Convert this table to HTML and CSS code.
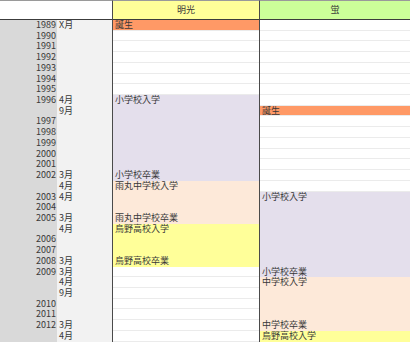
FILE: index.html
```html
<!DOCTYPE html>
<html lang="ja">
<head>
<meta charset="utf-8">
<title>年表</title>
<link rel="stylesheet" href="styles.css">
</head>
<body>
<div class="sheet">
  <div class="head head-blank"></div>
  <div class="head head-m">明光</div>
  <div class="head head-k">蛍</div>

  <div class="col col-year">
    <div class="r">1989</div><div class="r">1990</div><div class="r">1991</div><div class="r">1992</div>
    <div class="r">1993</div><div class="r">1994</div><div class="r">1995</div><div class="r">1996</div>
    <div class="r"></div><div class="r">1997</div><div class="r">1998</div><div class="r">1999</div>
    <div class="r">2000</div><div class="r">2001</div><div class="r">2002</div><div class="r"></div>
    <div class="r">2003</div><div class="r">2004</div><div class="r">2005</div><div class="r"></div>
    <div class="r">2006</div><div class="r">2007</div><div class="r">2008</div><div class="r">2009</div>
    <div class="r"></div><div class="r"></div><div class="r">2010</div><div class="r">2011</div>
    <div class="r">2012</div><div class="r"></div>
  </div>

  <div class="col col-month">
    <div class="r">X月</div><div class="r"></div><div class="r"></div><div class="r"></div>
    <div class="r"></div><div class="r"></div><div class="r"></div><div class="r">4月</div>
    <div class="r">9月</div><div class="r"></div><div class="r"></div><div class="r"></div>
    <div class="r"></div><div class="r"></div><div class="r">3月</div><div class="r">4月</div>
    <div class="r">4月</div><div class="r"></div><div class="r">3月</div><div class="r">4月</div>
    <div class="r"></div><div class="r"></div><div class="r">3月</div><div class="r">3月</div>
    <div class="r">4月</div><div class="r">9月</div><div class="r"></div><div class="r"></div>
    <div class="r">3月</div><div class="r">4月</div>
  </div>

  <div class="col col-person">
    <div class="r cell birth">誕生</div>
    <div class="r cell"></div><div class="r cell"></div><div class="r cell"></div>
    <div class="r cell"></div><div class="r cell"></div><div class="r cell"></div>
    <div class="block h8 elem"><div class="r">小学校入学</div><div class="r">小学校卒業</div></div>
    <div class="block h4 junior"><div class="r">雨丸中学校入学</div><div class="r">雨丸中学校卒業</div></div>
    <div class="block h4 high"><div class="r">烏野高校入学</div><div class="r">烏野高校卒業</div></div>
    <div class="r cell"></div><div class="r cell"></div><div class="r cell"></div>
    <div class="r cell"></div><div class="r cell"></div><div class="r cell"></div><div class="r cell"></div>
  </div>

  <div class="col col-person">
    <div class="r cell"></div><div class="r cell"></div><div class="r cell"></div><div class="r cell"></div>
    <div class="r cell"></div><div class="r cell"></div><div class="r cell"></div><div class="r cell"></div>
    <div class="r cell birth">誕生</div>
    <div class="r cell"></div><div class="r cell"></div><div class="r cell"></div><div class="r cell"></div>
    <div class="r cell"></div><div class="r cell"></div><div class="r cell"></div>
    <div class="block h8 elem"><div class="r">小学校入学</div><div class="r">小学校卒業</div></div>
    <div class="block h5 junior"><div class="r">中学校入学</div><div class="r">中学校卒業</div></div>
    <div class="block h1 high"><div class="r">烏野高校入学</div></div>
  </div>
</div>
</body>
</html>
```

FILE: styles.css
```css
:root {
  --r: 10.72px;
}

html, body {
  margin: 0;
  padding: 0;
  background: #ffffff;
  overflow: hidden;
}

body {
  font-family: "Noto Sans CJK JP", "Noto Sans", sans-serif;
  font-size: 9px;
  color: #383838;
}

.sheet {
  width: 410px;
  display: grid;
  grid-template-columns: 57px 55px 147px 151px;
  grid-template-rows: 20px auto;
}

.head {
  box-sizing: border-box;
  height: 20px;
  border-top: 1px solid #9a9a9a;
  border-bottom: 1px solid #3c3c3c;
  display: flex;
  align-items: center;
  justify-content: center;
  line-height: 1;
  padding-bottom: 1px;
}

.head-blank {
  grid-column: 1 / 3;
  background: #ffffff;
}

.head-m {
  background: #ffff99;
  border-left: 1px solid #4a4a4a;
}

.head-k {
  background: #ccff99;
  border-left: 1px solid #4a4a4a;
}

.col {
  display: flex;
  flex-direction: column;
}

.r {
  box-sizing: border-box;
  height: var(--r);
  line-height: var(--r);
  white-space: nowrap;
}

.col-year {
  background: #d9d9d9;
  text-align: right;
}

.col-year .r {
  padding-right: 1px;
}

.col-month {
  background: #f2f2f2;
}

.col-month .r {
  padding-left: 2px;
}

.col-person {
  border-left: 1px solid #4a4a4a;
  background: #ffffff;
}

.col-person .r {
  padding-left: 2px;
}

.cell {
  border-bottom: 1px solid #ebebeb;
}

.birth {
  background: #ff9966;
}

.block {
  display: flex;
  flex-direction: column;
  justify-content: space-between;
}

.h1 { height: var(--r); }
.h4 { height: calc(var(--r) * 4); }
.h5 { height: calc(var(--r) * 5); }
.h8 { height: calc(var(--r) * 8); }

.elem { background: #e4dfec; }
.junior { background: #fde9d9; }
.high { background: #ffff99; }
```
